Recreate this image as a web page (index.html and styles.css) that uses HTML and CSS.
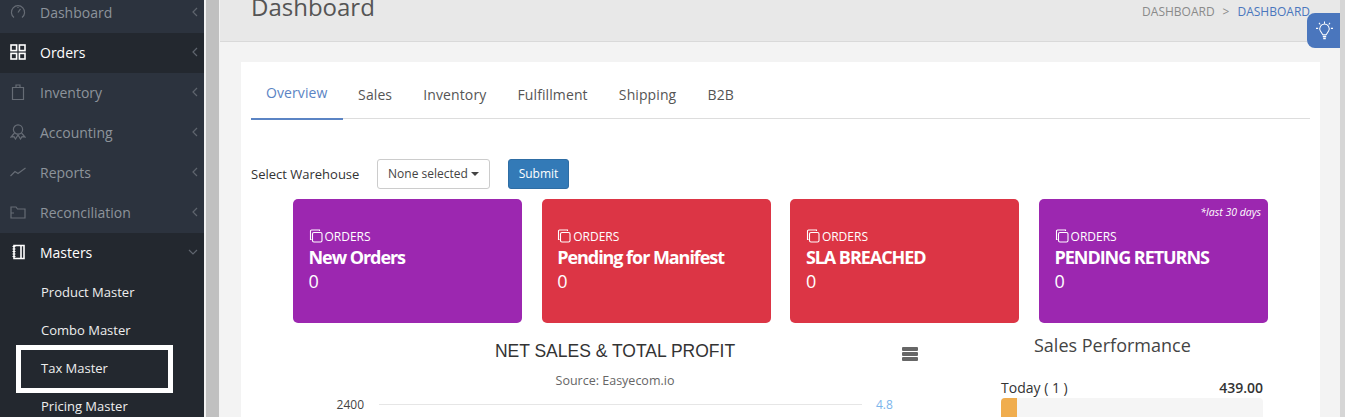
FILE: index.html
```html
<!doctype html>
<html>
<head>
  <meta charset="utf-8">
  <title>Dashboard</title>
  <link rel="stylesheet" href="styles.css">
</head>
<body>

  <aside class="sidebar">
    <ul class="menu">
      <li class="menu-item">
        <svg class="menu-icon" viewBox="0 0 16 16"><path d="M4 13.500a6.600 6.600 0 1 1 8 0"/><path d="M8 8.500 10.500 4.800M8 3v1"/></svg>
        <span class="menu-label">Dashboard</span>
        <svg class="chevron" viewBox="0 0 6 10"><path d="M5 1 1 5l4 4"/></svg>
      </li>
      <li class="menu-item active">
        <svg class="menu-icon" viewBox="0 0 16 16"><rect x="1" y="1" width="5.600" height="5.600"/><rect x="9.400" y="1" width="5.600" height="5.600"/><rect x="1" y="9.400" width="5.600" height="5.600"/><rect x="9.400" y="9.400" width="5.600" height="5.600"/></svg>
        <span class="menu-label">Orders</span>
        <svg class="chevron" viewBox="0 0 6 10"><path d="M5 1 1 5l4 4"/></svg>
      </li>
      <li class="menu-item">
        <svg class="menu-icon" viewBox="0 0 16 16"><path d="M2.500 3.500h11v12h-11zM6 3.500V1h4v2.500"/></svg>
        <span class="menu-label">Inventory</span>
        <svg class="chevron" viewBox="0 0 6 10"><path d="M5 1 1 5l4 4"/></svg>
      </li>
      <li class="menu-item">
        <svg class="menu-icon" viewBox="0 0 16 16"><circle cx="8" cy="5.500" r="4.600"/><path d="M4.500 9 1 13l3-.4 1.500 2.400 2.500-4 2.500 4 1.500-2.400 3 .4L11.500 9"/></svg>
        <span class="menu-label">Accounting</span>
        <svg class="chevron" viewBox="0 0 6 10"><path d="M5 1 1 5l4 4"/></svg>
      </li>
      <li class="menu-item">
        <svg class="menu-icon" viewBox="0 0 16 16"><path d="M.5 12 5 7.500 8 9.500 15.500 4"/></svg>
        <span class="menu-label">Reports</span>
        <svg class="chevron" viewBox="0 0 6 10"><path d="M5 1 1 5l4 4"/></svg>
      </li>
      <li class="menu-item">
        <svg class="menu-icon" viewBox="0 0 16 16"><path d="M1 14V3h5l1.500 2H15v9zM1 9h3"/></svg>
        <span class="menu-label">Reconciliation</span>
        <svg class="chevron" viewBox="0 0 6 10"><path d="M5 1 1 5l4 4"/></svg>
      </li>
      <li class="menu-item open">
        <svg class="menu-icon" viewBox="0 0 16 16"><path d="M4 1.500h10v13H4zM11 1.500v13"/><path class="ticks" d="M2.500 2.500h3M2.500 5h3M2.500 7.500h3M2.500 10h3M2.500 12.500h3"/></svg>
        <span class="menu-label">Masters</span>
        <svg class="chevron down" viewBox="0 0 10 6"><path d="M1 1l4 4 4-4"/></svg>
      </li>
    </ul>
    <ul class="submenu">
      <li>Product Master</li>
      <li>Combo Master</li>
      <li class="marked">Tax Master</li>
      <li>Pricing Master</li>
    </ul>
  </aside>

  <div class="gutter"></div>

  <main class="main">
    <header class="page-head">
      <h1>Dashboard</h1>
      <div class="crumbs">
        <span>DASHBOARD</span>
        <span class="sep">&gt;</span>
        <span class="current">DASHBOARD</span>
      </div>
      <div class="tip">
        <svg viewBox="0 0 20 22"><path d="M8 16 5.200 11.500a5.500 5.500 0 1 1 9.600 0L12 16z"/><path class="bulb-base" d="M8 18h4M8.500 20.300h3"/><path d="M10 .5v2.500M3.500 2 5 4M16.500 2 15 4M0 8.500h2.500M17.500 8.500H20"/></svg>
      </div>
    </header>

    <section class="panel">
      <nav class="tabs">
        <a class="tab selected">Overview</a>
        <a class="tab">Sales</a>
        <a class="tab">Inventory</a>
        <a class="tab">Fulfillment</a>
        <a class="tab">Shipping</a>
        <a class="tab">B2B</a>
      </nav>

      <form class="filter">
        <label>Select Warehouse</label>
        <div class="select">None selected <i class="caret"></i></div>
        <div class="btn">Submit</div>
      </form>

      <div class="cards">
        <div class="card purple">
          <div class="card-tag"><svg viewBox="0 0 14 14"><path d="M2.500 10.500h-1V2A1 1 0 0 1 2.500 1H10.500v1"/><rect x="3.500" y="3.500" width="9.500" height="9.500" rx="1.500"/></svg>ORDERS</div>
          <div class="card-title">New Orders</div>
          <div class="card-num">0</div>
        </div>
        <div class="card red">
          <div class="card-tag"><svg viewBox="0 0 14 14"><path d="M2.500 10.500h-1V2A1 1 0 0 1 2.500 1H10.500v1"/><rect x="3.500" y="3.500" width="9.500" height="9.500" rx="1.500"/></svg>ORDERS</div>
          <div class="card-title">Pending for Manifest</div>
          <div class="card-num">0</div>
        </div>
        <div class="card red">
          <div class="card-tag"><svg viewBox="0 0 14 14"><path d="M2.500 10.500h-1V2A1 1 0 0 1 2.500 1H10.500v1"/><rect x="3.500" y="3.500" width="9.500" height="9.500" rx="1.500"/></svg>ORDERS</div>
          <div class="card-title">SLA BREACHED</div>
          <div class="card-num">0</div>
        </div>
        <div class="card purple">
          <em class="card-note">*last 30 days</em>
          <div class="card-tag"><svg viewBox="0 0 14 14"><path d="M2.500 10.500h-1V2A1 1 0 0 1 2.500 1H10.500v1"/><rect x="3.500" y="3.500" width="9.500" height="9.500" rx="1.500"/></svg>ORDERS</div>
          <div class="card-title">PENDING RETURNS</div>
          <div class="card-num">0</div>
        </div>
      </div>

      <div class="lower">
        <div class="chart">
          <div class="chart-head">
            <h2>NET SALES &amp; TOTAL PROFIT</h2>
            <div class="burger"><i></i><i></i><i></i></div>
          </div>
          <div class="chart-sub">Source: Easyecom.io</div>
          <div class="axis-row">
            <span class="axis-left">2400</span>
            <span class="grid-line"></span>
            <span class="axis-right">4.8</span>
          </div>
        </div>
        <div class="perf">
          <h3>Sales Performance</h3>
          <div class="perf-row">
            <span>Today ( 1 )</span>
            <b>439.00</b>
          </div>
          <div class="bar"><div class="bar-fill" style="width: 6%"></div></div>
        </div>
      </div>
    </section>
  </main>

  <div class="edge"></div>

</body>
</html>
```

FILE: styles.css
```css
html, body {
  height: 100%;
  margin: 0;
  overflow: hidden;
}

body {
  display: flex;
  height: 417px;
  font-family: "Open Sans", sans-serif;
  color: #333;
  background: #f3f3f3;
}

ul {
  list-style: none;
  margin: 0;
  padding: 0;
}

/* sidebar */
.sidebar {
  width: 204px;
  flex: none;
  margin-top: -7px;
  background: #2c333e;
}

.menu-item {
  display: flex;
  align-items: center;
  height: 40px;
  padding: 0 6px 2px 10px;
  box-sizing: border-box;
  color: #8d939b;
  font-size: 14px;
}

.menu-item.active,
.menu-item.open {
  background: #23282f;
  color: #fff;
}

.menu-icon {
  width: 16px;
  height: 16px;
  margin-right: 14px;
  fill: none;
  stroke: #666c75;
  stroke-width: 1.200;
}

.active .menu-icon,
.open .menu-icon {
  stroke: #fff;
  stroke-width: 1.600;
}

.menu-icon .ticks {
  stroke-width: 1;
}

.menu-label {
  flex: 1;
}

.chevron {
  width: 6px;
  height: 10px;
  fill: none;
  stroke: #5f656e;
  stroke-width: 1.200;
}

.chevron.down {
  width: 10px;
  height: 6px;
}

.submenu {
  background: #23282f;
  height: 200px;
  color: #eee;
  font-size: 13px;
}

.submenu li {
  height: 38px;
  line-height: 38px;
  padding-left: 41px;
}

.submenu .marked {
  position: relative;
}

.submenu .marked::after {
  content: "";
  position: absolute;
  left: 16px;
  top: -4px;
  width: 157px;
  height: 48px;
  box-sizing: border-box;
  border: 5px solid #fff;
}

.gutter {
  flex: none;
  width: 16px;
  border-left: 2px solid #f2f2f2;
  border-right: 1px solid #f2f2f2;
  box-sizing: border-box;
  background: #c0c0c0;
}

/* main */
.main {
  flex: 1;
  min-width: 0;
}

.page-head {
  position: relative;
  height: 42px;
  box-sizing: border-box;
  border-bottom: 1px solid #d9d9d9;
  background: #e8e8e8;
  display: flex;
  justify-content: space-between;
  padding: 0 30px 0 31px;
}

.page-head h1 {
  margin: -7px 0 0;
  font-size: 24px;
  font-weight: 500;
  line-height: 28px;
  color: #555;
}

.crumbs {
  display: flex;
  gap: 8px;
  margin-top: 3px;
  font-size: 12px;
  font-weight: 500;
  line-height: 17px;
  color: #8a8a8a;
}

.crumbs .current {
  color: #4a76bd;
}

.tip {
  position: absolute;
  right: 0;
  top: 13px;
  width: 33px;
  height: 35px;
  box-sizing: border-box;
  padding: 8px 7px 0 9px;
  border-radius: 8px 0 0 8px;
  background: #4a76bd;
}

.tip svg {
  display: block;
  width: 17px;
  height: 19px;
  fill: none;
  stroke: #fff;
  stroke-width: 1.200;
}

.tip .bulb-base {
  stroke-width: 1.800;
}

.panel {
  margin: 20px 20px 0 21px;
  padding: 0 10px;
  height: 400px;
  background: #fff;
}

.tabs {
  display: flex;
  height: 56px;
  border-bottom: 1px solid #ddd;
}

.tab {
  padding: 0 15.600px;
  line-height: 66px;
  font-size: 14px;
  font-weight: 500;
  letter-spacing: .1px;
  color: #555;
}

.tab.selected {
  height: 58px;
  padding: 0 15px;
  line-height: 62px;
  color: #5b84c4;
  border-bottom: 2px solid #5b84c4;
  box-sizing: border-box;
}

.filter {
  display: flex;
  align-items: center;
  margin-top: 39px;
  height: 31px;
}

.filter label {
  width: 126px;
  font-size: 13px;
  font-weight: 500;
  color: #333;
}

.select {
  width: 113px;
  height: 30px;
  box-sizing: border-box;
  border: 1px solid #ccc;
  border-radius: 3px;
  line-height: 28px;
  text-align: center;
  font-size: 12px;
  color: #444;
}

.caret {
  display: inline-block;
  border-top: 4px solid #444;
  border-left: 4px solid transparent;
  border-right: 4px solid transparent;
  vertical-align: 2px;
}

.btn {
  width: 61px;
  height: 30px;
  margin-left: 18px;
  box-sizing: border-box;
  border: 1px solid #2e6da4;
  border-radius: 3px;
  background: #337ab7;
  color: #fff;
  line-height: 28px;
  text-align: center;
  font-size: 12px;
}

/* cards */
.cards {
  display: flex;
  gap: 19.700px;
  margin: 10px 0 0 42px;
}

.card {
  position: relative;
  width: 229px;
  height: 124px;
  box-sizing: border-box;
  padding: 29px 16px 0 15.500px;
  border-radius: 5px;
  color: #fff;
}

.purple {
  background: #9c27b0;
}

.red {
  background: #dc3545;
}

.card-tag {
  display: flex;
  align-items: center;
  gap: 2px;
  height: 16px;
  font-size: 12px;
}

.card-tag svg {
  width: 14px;
  height: 14px;
  fill: none;
  stroke: #fff;
  stroke-width: 1.100;
}

.card-title {
  margin-top: 1px;
  font-size: 18px;
  font-weight: 700;
  letter-spacing: -1.050px;
  line-height: 25px;
}

.card-num {
  margin-top: -1px;
  font-size: 18px;
  line-height: 24px;
}

.card-note {
  position: absolute;
  right: 7px;
  top: 6px;
  font-size: 10.500px;
}

/* chart area */
.lower {
  display: flex;
}

.chart {
  width: 648px;
  margin-left: 40px;
  flex: none;
}

.chart-head {
  display: flex;
  align-items: center;
  justify-content: center;
  position: relative;
  height: 44px;
}

.chart-head h2 {
  margin: 13px 0 0;
  font-family: "Liberation Sans", sans-serif;
  font-weight: 400;
  font-size: 17.500px;
  color: #333;
}

.burger {
  position: absolute;
  right: 21px;
  top: 24px;
  width: 16px;
}

.burger i {
  display: block;
  height: 3.500px;
  margin-bottom: 1.500px;
  background: #666;
  border-radius: 1px;
}

.chart-sub {
  margin-top: 6px;
  font-size: 12.500px;
  line-height: 15px;
  text-align: center;
  color: #666;
}

.axis-row {
  display: flex;
  align-items: center;
  margin-top: 8px;
  font-size: 12px;
  color: #444;
}

.axis-left {
  width: 73px;
  text-align: right;
}

.grid-line {
  flex: none;
  width: 483px;
  height: 1px;
  margin-left: 15px;
  background: #e6e6e6;
}

.axis-right {
  margin-left: 14px;
  color: #7cb5ec;
}

.perf {
  width: 262px;
  margin-left: 62px;
}

.perf h3 {
  margin: 8px 0 0 33px;
  font-size: 18px;
  font-weight: 400;
  color: #444;
  line-height: 28px;
}

.perf-row {
  display: flex;
  justify-content: space-between;
  align-items: baseline;
  margin-top: 20px;
  font-size: 14px;
  line-height: 18px;
}

.perf-row b {
  font-weight: 600;
}

.bar {
  height: 22px;
  margin-top: 1px;
  border-radius: 4px;
  background: #f5f5f5;
  overflow: hidden;
}

.bar-fill {
  height: 100%;
  background: #f0ad4e;
}

.edge {
  flex: none;
  width: 5px;
  background: #d6d6d6;
}
```
